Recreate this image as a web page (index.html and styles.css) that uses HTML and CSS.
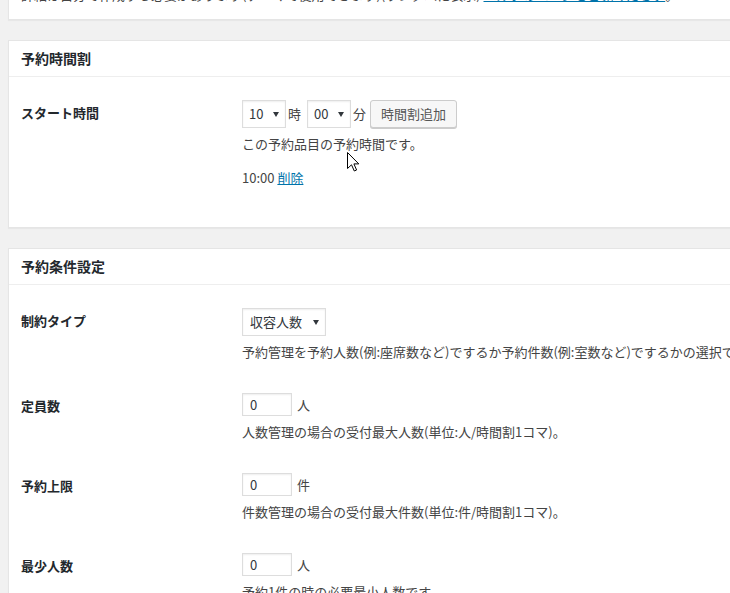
FILE: index.html
```html
<!DOCTYPE html>
<html lang="ja">
<head>
    <meta charset="UTF-8">
    <title>予約品目の編集</title>
    <link rel="stylesheet" href="styles.css">
</head>
<body>
    <div class="wrap">
        <div class="postbox postbox-cut">
            <div class="inside">
                <p class="intro">詳細は自分で作成する必要があります(テーマで使用できます)(ランダムに表示) <a href="#">ヘルプのページをご覧ください</a>。</p>
            </div>
        </div>

        <div class="postbox">
            <h2 class="hndle">予約時間割</h2>
            <div class="inside">
                <div class="row">
                    <div class="row-label">スタート時間</div>
                    <div class="row-field">
                        <div class="controls">
                            <span class="select-wrap"><select class="sel-time"><option>10</option></select></span>
                            <span class="unit-tight">時</span>
                            <span class="select-wrap"><select class="sel-time"><option>00</option></select></span>
                            <span class="unit-tight">分</span>
                            <button type="button" class="button">時間割追加</button>
                        </div>
                        <p class="description">この予約品目の予約時間です。</p>
                        <div class="time-list">10:00 <a href="#">削除</a></div>
                    </div>
                </div>
            </div>
        </div>

        <div class="postbox">
            <h2 class="hndle">予約条件設定</h2>
            <div class="inside">
                <div class="row">
                    <div class="row-label">制約タイプ</div>
                    <div class="row-field">
                        <div class="controls">
                            <span class="select-wrap"><select class="sel-type"><option>収容人数</option></select></span>
                        </div>
                        <p class="description">予約管理を予約人数(例:座席数など)でするか予約件数(例:室数など)でするかの選択です。</p>
                    </div>
                </div>
                <div class="row">
                    <div class="row-label">定員数</div>
                    <div class="row-field">
                        <div class="controls">
                            <input type="text" class="small-text" value="0">
                            <span class="unit">人</span>
                        </div>
                        <p class="description">人数管理の場合の受付最大人数(単位:人/時間割1コマ)。</p>
                    </div>
                </div>
                <div class="row">
                    <div class="row-label">予約上限</div>
                    <div class="row-field">
                        <div class="controls">
                            <input type="text" class="small-text" value="0">
                            <span class="unit">件</span>
                        </div>
                        <p class="description">件数管理の場合の受付最大件数(単位:件/時間割1コマ)。</p>
                    </div>
                </div>
                <div class="row">
                    <div class="row-label">最少人数</div>
                    <div class="row-field">
                        <div class="controls">
                            <input type="text" class="small-text" value="0">
                            <span class="unit">人</span>
                        </div>
                        <p class="description">予約1件の時の必要最小人数です。</p>
                    </div>
                </div>
            </div>
        </div>
    </div>

    <!-- mouse pointer captured in the screenshot -->
    <svg class="pointer" width="13" height="20" viewBox="0 0 13 20">
        <path d="M0.5 0.5 L0.5 16.5 L4.5 12.8 L7.3 19 L9.6 18 L6.9 11.9 L11.8 11.9 Z" fill="#fff" stroke="#000" stroke-width="1" stroke-linejoin="miter"/>
    </svg>
</body>
</html>
```

FILE: styles.css
```css
html, body {
    margin: 0;
    padding: 0;
}
body {
    background: #f1f1f1;
    color: #444;
    font-family: "Noto Sans CJK JP", "Noto Sans", sans-serif;
    font-size: 13px;
    line-height: 20px;
    overflow: hidden;
    position: relative;
    height: 593px;
}
a {
    color: #0073aa;
    text-decoration: underline;
}
.wrap {
    width: 820px;
    padding-left: 8px;
}
.postbox {
    background: #fff;
    border: 1px solid #e5e5e5;
    box-shadow: 0 1px 1px rgba(0,0,0,0.04);
    margin-bottom: 20px;
}
.postbox-cut {
    margin-top: -28px;
}
.postbox-cut .inside {
    padding: 12px 12px 14px;
}
.intro {
    margin: 0;
    white-space: nowrap;
}
.hndle {
    margin: 0;
    height: 35px;
    padding: 0 12px;
    font-size: 14px;
    line-height: 35px;
    font-weight: bold;
    color: #23282d;
    border-bottom: 1px solid #eee;
}
.inside {
    padding: 8px 12px 12px;
}
.row {
    display: flex;
    padding: 15px 0 16px;
}
.row-label {
    width: 221px;
    flex-shrink: 0;
    padding-top: 3px;
    font-weight: bold;
    color: #23282d;
}
.row-field {
    flex: 1;
    min-width: 0;
}
.controls {
    display: flex;
    align-items: center;
    white-space: nowrap;
}
.description {
    margin: 6px 0 0;
    white-space: nowrap;
}
.time-list {
    margin: 14px 0 11px;
}
.select-wrap {
    position: relative;
    display: inline-block;
}
.select-wrap::after {
    content: "";
    position: absolute;
    right: 7px;
    top: 50%;
    margin-top: -2px;
    border-left: 3px solid transparent;
    border-right: 3px solid transparent;
    border-top: 5px solid #32373c;
    pointer-events: none;
}
select {
    -webkit-appearance: none;
    appearance: none;
    display: block;
    height: 28px;
    margin: 0;
    padding: 0 20px 0 6px;
    border: 1px solid #ddd;
    border-radius: 0;
    background: #fff;
    box-shadow: inset 0 1px 2px rgba(0,0,0,0.07);
    color: #32373c;
    font-family: inherit;
    font-size: 13px;
    line-height: 26px;
}
.sel-time {
    width: 44px;
}
.sel-type {
    width: 84px;
    padding-left: 7px;
}
.unit-tight {
    margin: 0 6px 0 2px;
}
.unit {
    margin-left: 5px;
}
.button {
    height: 28px;
    margin-left: -2px;
    padding: 0 10px;
    border: 1px solid #ccc;
    border-radius: 3px;
    background: #f7f7f7;
    box-shadow: 0 1px 0 #ccc;
    color: #555;
    font-family: inherit;
    font-size: 13px;
    line-height: 26px;
}
.small-text {
    width: 50px;
    height: 23px;
    box-sizing: border-box;
    margin: 0;
    padding: 0 7px;
    border: 1px solid #ddd;
    box-shadow: inset 0 1px 2px rgba(0,0,0,0.07);
    color: #32373c;
    font-family: inherit;
    font-size: 13px;
}
.pointer {
    position: absolute;
    left: 347px;
    top: 152px;
}
```
